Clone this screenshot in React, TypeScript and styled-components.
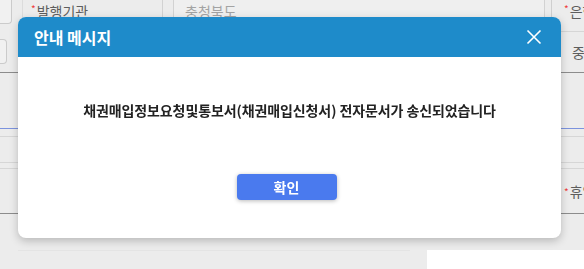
import React from "react";
import styled, { createGlobalStyle } from "styled-components";

const GlobalStyle = createGlobalStyle`
  html, body {
    margin: 0;
    padding: 0;
  }
  body {
    width: 584px;
    height: 269px;
    overflow: hidden;
    background: #ececec;
    font-family: "Noto Sans CJK KR", "Noto Sans", sans-serif;
  }
`;

const Page = styled.div`
  display: flex;
  flex-direction: column;
  width: 584px;
  height: 269px;
`;

const FormRow = styled.div<{ $height: number; $line?: string }>`
  display: grid;
  grid-template-columns: 22px 140px 389px 33px;
  height: ${(p) => p.$height}px;
  box-sizing: border-box;
  border-bottom: ${(p) => (p.$line ? `1px solid ${p.$line}` : "none")};
`;

const StubCell = styled.div<{ $top: number }>`
  padding-top: ${(p) => p.$top}px;
`;

const InputStub = styled.div<{ $width: number; $height: number; $open?: boolean }>`
  width: ${(p) => p.$width}px;
  height: ${(p) => p.$height}px;
  box-sizing: border-box;
  background: #f1f1f1;
  border: 1px solid #cbcbcb;
  border-left: none;
  border-top: ${(p) => (p.$open ? "none" : "1px solid #cbcbcb")};
  border-radius: ${(p) => (p.$open ? "0 0 4px 0" : "0 4px 4px 0")};
`;

const LabelCell = styled.div`
  border-left: 1px solid #dcdcdc;
  padding: 1px 0 0 8px;
  font-size: 14px;
  color: #5e5e5e;
  white-space: nowrap;
  overflow: hidden;
`;

const Star = styled.span`
  color: #ef3b3b;
  font-size: 10px;
  vertical-align: top;
  margin-right: 1px;
`;

const InputCell = styled.div`
  border-left: 1px solid #d2d2d2;
  padding: 0 6px 0 10px;
`;

const InputBox = styled.div`
  height: 24px;
  box-sizing: border-box;
  border: 1px solid #d2d2d2;
  border-top: none;
  border-radius: 0 0 4px 4px;
  background: #efefef;
  padding: 1px 0 0 11px;
  font-size: 14px;
  color: #a3a3a3;
`;

const SideLabel = styled.div<{ $pad: number; $center?: boolean; $line?: boolean }>`
  display: flex;
  align-items: ${(p) => (p.$center ? "center" : "flex-start")};
  padding-left: ${(p) => p.$pad}px;
  padding-top: ${(p) => (p.$center ? 0 : 1)}px;
  border-left: 1px solid #cfcfcf;
  border-bottom: ${(p) => (p.$line ? "1px solid #d6d6d6" : "none")};
  font-size: 14px;
  color: #5e5e5e;
  white-space: nowrap;
  overflow: hidden;
`;

const Rule = styled.div<{ $color: string; $gap: number }>`
  margin-top: ${(p) => p.$gap}px;
  height: 1px;
  background: ${(p) => p.$color};
`;

const Footer = styled.div`
  display: flex;
  margin-top: 36px;
  flex: 1;
`;

const FooterShade = styled.div`
  margin-left: 18px;
  width: 392px;
  border-top: 1px solid #e4e4e4;
`;

const WhiteBlock = styled.div`
  margin-left: auto;
  width: 157px;
  background: #ffffff;
`;

const Backdrop = styled.div`
  position: fixed;
  inset: 0;
  padding: 17px 0 0 18px;
`;

const Dialog = styled.div`
  width: 543px;
  height: 221px;
  background: #ffffff;
  border-radius: 8px;
  overflow: hidden;
  box-shadow: 0 3px 9px rgba(0, 0, 0, 0.22);
  display: flex;
  flex-direction: column;
`;

const Header = styled.div`
  height: 40px;
  flex-shrink: 0;
  display: flex;
  align-items: center;
  justify-content: space-between;
  padding: 0 19px 0 16px;
  background: #1e8bca;
`;

const Title = styled.div`
  font-size: 16px;
  font-weight: 700;
  color: #ffffff;
`;

const CloseButton = styled.button`
  display: flex;
  padding: 0;
  border: none;
  background: none;
  cursor: pointer;
`;

const Body = styled.div`
  flex: 1;
  display: flex;
  flex-direction: column;
  align-items: center;
  padding-top: 43px;
`;

const Message = styled.div`
  font-size: 14px;
  line-height: 21px;
  font-weight: 700;
  color: #222222;
  letter-spacing: -0.1px;
`;

const ConfirmButton = styled.button`
  margin: 53px 6px 0 0;
  width: 100px;
  height: 26px;
  border: none;
  border-radius: 4px;
  background: #4a7aee;
  box-shadow: 0 1px 4px rgba(0, 0, 0, 0.28);
  color: #ffffff;
  font-family: inherit;
  font-size: 14px;
  font-weight: 700;
  cursor: pointer;
`;

const CloseIcon = () => (
  <svg width="16" height="16" viewBox="0 0 16 16" fill="none">
    <path d="M1.5 1.5L14.5 14.5M14.5 1.5L1.5 14.5" stroke="#ffffff" strokeWidth="1.6" />
  </svg>
);

const App: React.FC = () => {
  return (
    <>
      <GlobalStyle />
      <Page>
        <FormRow $height={32}>
          <StubCell $top={0}>
            <InputStub $width={12} $height={24} $open />
          </StubCell>
          <LabelCell>
            <Star>*</Star>발행기관
          </LabelCell>
          <InputCell>
            <InputBox>충청북도</InputBox>
          </InputCell>
          <SideLabel $pad={12} $line>
            <Star>*</Star>은행
          </SideLabel>
        </FormRow>
        <FormRow $height={41} $line="#8c8c8c">
          <StubCell $top={7}>
            <InputStub $width={7} $height={25} />
          </StubCell>
          <div />
          <div />
          <SideLabel $pad={20} $center>
            중도
          </SideLabel>
        </FormRow>
        <Rule $color="#7c93de" $gap={55} />
        <Rule $color="#d6d6d6" $gap={7} />
        <Rule $color="#d6d6d6" $gap={25} />
        <Rule $color="#d6d6d6" $gap={5} />
        <FormRow $height={45} $line="#8c8c8c">
          <div />
          <div />
          <div />
          <SideLabel $pad={12} $center>
            <Star>*</Star>휴일
          </SideLabel>
        </FormRow>
        <Footer>
          <FooterShade />
          <WhiteBlock />
        </Footer>
      </Page>
      <Backdrop>
        <Dialog>
          <Header>
            <Title>안내 메시지</Title>
            <CloseButton aria-label="닫기">
              <CloseIcon />
            </CloseButton>
          </Header>
          <Body>
            <Message>채권매입정보요청및통보서(채권매입신청서) 전자문서가 송신되었습니다</Message>
            <ConfirmButton>확인</ConfirmButton>
          </Body>
        </Dialog>
      </Backdrop>
    </>
  );
};

export default App;
